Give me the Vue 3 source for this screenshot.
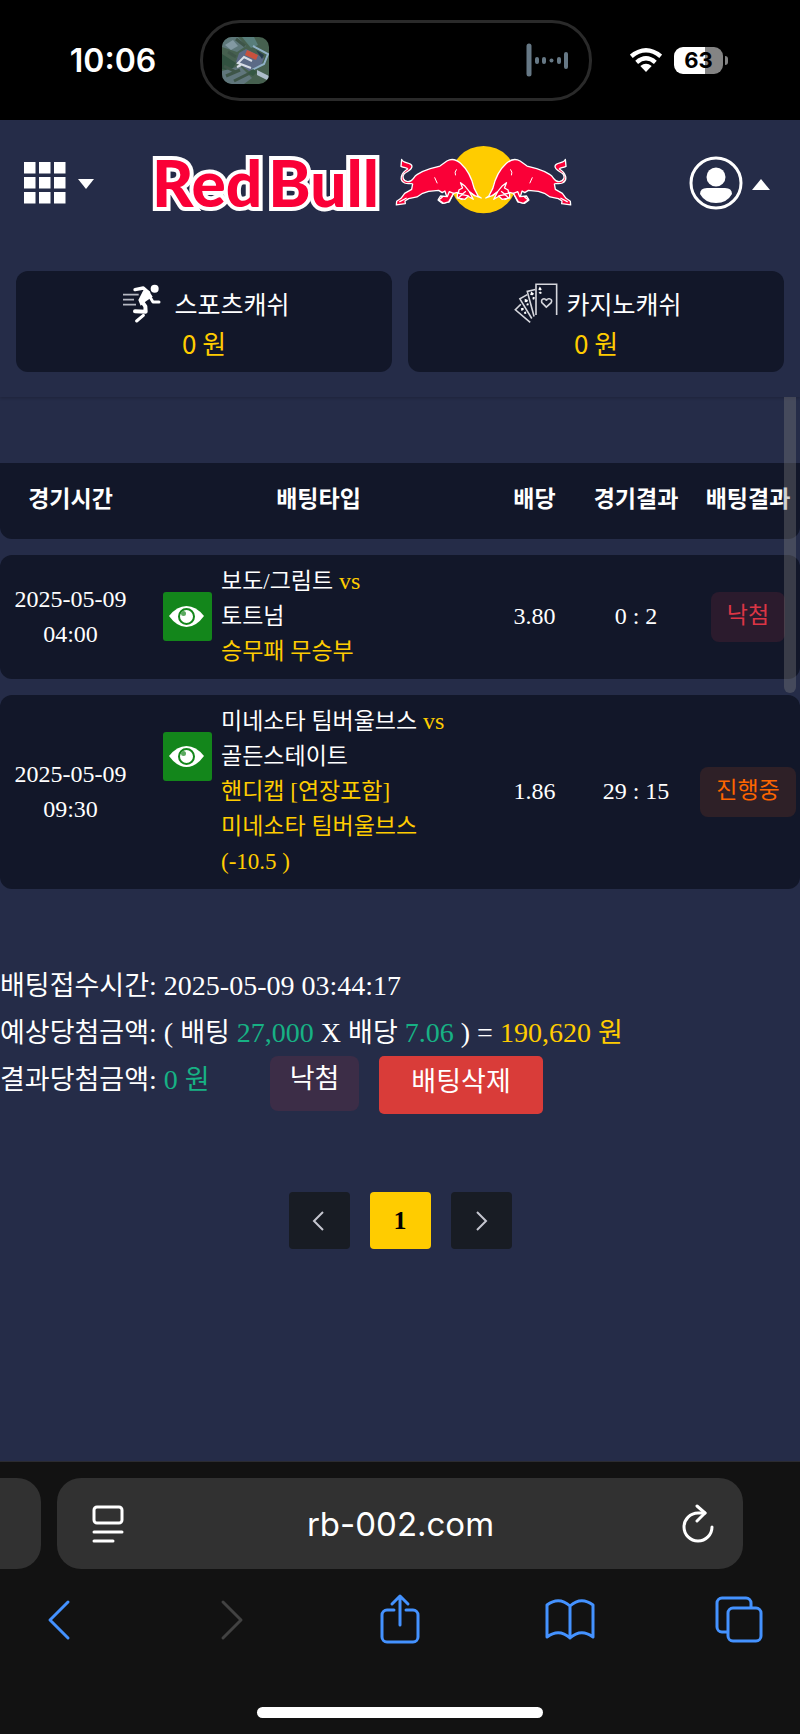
<template>
  <div class="phone">
    <div class="status-bar">
      <time class="clock">10:06</time>
      <div class="island">
        <svg class="island-photo" viewBox="0 0 47 47" aria-hidden="true">
          <rect width="47" height="47" fill="#46604f" />
          <path d="M0 0h16l8 9-9 6-15-5z" fill="#5d7779" />
          <path d="M3 8l8-5 5 6-7 4z" fill="#8299a2" />
          <path d="M20 0h12l4 8-7 3z" fill="#587e7b" />
          <path d="M0 17l14 9-5 8-9-2z" fill="#315140" />
          <path d="M0 34l18-5 12 12-8 6H0z" fill="#60767c" />
          <path d="M4 39l14-6M12 44l16-8M2 29l12 6M6 15l8 5M14 2l9 7" stroke="#3e5548" stroke-width="3" />
          <path d="M24 12l18 9-3 8-12 5-13-9 3-9z" fill="#5b6a86" />
          <path d="M29 31l-13-5 6-6 8 4M19 28l-4 2" fill="none" stroke="#d6dce5" stroke-width="2" />
          <path d="M25 13l11 5-2 5-11-5z" fill="#c8513d" />
          <path d="M31 9l15 8-4 10-12 6" fill="none" stroke="#8fb0c6" stroke-width="2" />
          <path d="M34 13l8 5-2 4z" fill="#253b4c" />
          <path d="M35 33l12 6v5l-12-6z" fill="#aebdcb" />
          <path d="M31 32l4 3-4 4-5-3z" fill="#355743" />
        </svg>
        <svg class="island-wave" viewBox="0 0 44 36" aria-hidden="true">
          <g stroke="#667885" stroke-width="4" stroke-linecap="round">
            <path d="M3 4v28" stroke-width="5" />
            <path d="M11 17v3M18 17v3M33 17v3M40 12v13" />
            <path d="M25.500 18.500v.1" />
          </g>
        </svg>
      </div>
      <div class="signals">
        <svg class="wifi" viewBox="0 0 96 72" aria-label="Wi-Fi">
          <g fill="none" stroke="#fff" stroke-width="13">
            <path d="M4 25Q48-11 92 25" />
            <path d="M20 43Q48 19 76 43" />
          </g>
          <path d="M31 54Q48 41 65 54L48 72z" fill="#fff" />
        </svg>
        <div class="battery"><span>63</span></div>
      </div>
    </div>

    <header class="site-header">
      <div class="top-row">
        <button class="plain menu-btn" aria-label="메뉴">
          <svg viewBox="0 0 70 42" class="menu-icon">
            <g fill="#fff">
              <template v-for="y in [0, 15, 30]" :key="y">
                <rect v-for="x in [0, 15, 30]" :key="x" :x="x" :y="y" width="11.500" height="11.500" />
              </template>
              <path d="M54 17h16l-8 10z" />
            </g>
          </svg>
        </button>
        <a href="#" class="logo">
          <span class="logo-text"><span>Red</span> <span>Bull</span></span>
          <svg class="logo-bulls" viewBox="-19 432 532 216" aria-hidden="true">
            <circle cx="247" cy="539" r="101" fill="#ffcc00" />
            <g id="bull" fill="#fa0037" stroke="#fff" stroke-width="4" stroke-linejoin="round">
              <path d="M254 594L263 588 275 565C282 535 294 510 316 490Q337 471 357 483L378 498 407 506Q430 513 447 524C460 532 458 546 475 545 489 543 493 530 485 521 477 514 461 510 462 498 464 486 490 491 493 478L495 499C484 504 476 503 475 507 495 519 502 540 484 549 472 554 462 548 460 552L463 568 484 580 495 595 508 604 509 615 482 611 483 603 472 596 447 591 430 580 412 574 382 571 371 578 363 573 357 592 373 596 383 601 371 610 350 606 337 580 325 577 326 594 303 598 293 589 278 598 289 576 271 588z" />
              <path d="M337 580L350 575 356 590 376 588 383 599 367 610 352 606z" />
              <path d="M273 588Q291 577 303 558L316 548 310 564 321 570 322 580 310 582 300 574" fill="none" />
              <path d="M328 508Q335 516 331 526M394 532L386 550" fill="none" stroke-width="3" />
              <path d="M292 588L312 584 323 594 310 599M478 594L500 606M370 591L382 600" fill="none" />
            </g>
            <use href="#bull" transform="translate(494 0) scale(-1 1)" />
          </svg>
        </a>
        <button class="plain profile-btn" aria-label="내 정보">
          <svg viewBox="0 0 81 54" class="profile-icon">
            <circle cx="27" cy="27" r="25" fill="none" stroke="#fff" stroke-width="3" />
            <circle cx="27" cy="21" r="9.500" fill="#fff" />
            <path d="M11 38q0-6 7-6h18q7 0 7 6-5 9-16 9t-16-9z" fill="#fff" />
            <path d="M63 34l9-11 9 11z" fill="#fff" />
          </svg>
        </button>
      </div>

      <div class="wallets">
        <section class="wallet">
          <div class="wallet-title">
            <svg class="wallet-icon" viewBox="366 98 132 120" aria-hidden="true">
              <path d="M369 133h47M369 148h33M369 163h39" stroke="#b5b8c2" stroke-width="5" />
              <circle cx="464" cy="115" r="12" fill="#fff" />
              <g fill="none" stroke="#fff" stroke-linecap="round" stroke-linejoin="round">
                <path d="M405 118L430 113 446 127" stroke-width="10" />
                <path d="M443 127L424 151 436 168 437 184 405 183" stroke-width="12" />
                <path d="M444 130L459 155H477" stroke-width="9" />
                <path d="M430 195L410 212" stroke-width="9" />
              </g>
              <path d="M430 120L447 122 458 139 438 153 422 166 415 149z" fill="#fff" />
            </svg>
            <span>스포츠캐쉬</span>
          </div>
          <div class="wallet-amount">0 원</div>
        </section>
        <section class="wallet">
          <div class="wallet-title">
            <svg class="wallet-icon" viewBox="340 98 132 124" aria-hidden="true">
              <g fill="none" stroke="#d5d6dc" stroke-width="5">
                <path d="M406 197V102H470V197" />
                <path d="M400 202L379 124 404 118" />
                <path d="M393 208L356 147 379 134" />
                <path d="M388 220L342 181 359 164" />
                <path d="M438 173L424 159Q421 148 431 147 437 147 438 153 440 146 447 147 458 149 453 159z" />
              </g>
              <g fill="#fff">
                <path d="M418 109l6 9-5 3-6-3zM419 124l6 5-6 3-5-4z" />
                <path d="M391 124l9 7-4 5-8-1zM396 141l7 2-3 7-5-2z" />
                <path d="M371 147l10 4-2 6-8 1zM378 161l6 1-2 6-6-1z" />
                <path d="M359 176l8-1 1 6-7 4zM369 188l6-2 1 7-6 1z" />
              </g>
            </svg>
            <span>카지노캐쉬</span>
          </div>
          <div class="wallet-amount">0 원</div>
        </section>
      </div>
    </header>

    <main class="content">
      <div class="scroll-thumb"></div>
      <table class="bets">
        <thead>
          <tr>
            <th class="col-time">경기시간</th>
            <th class="col-type">배팅타입</th>
            <th class="col-odds">배당</th>
            <th class="col-score">경기결과</th>
            <th class="col-result">배팅결과</th>
          </tr>
        </thead>
        <tbody>
          <tr v-for="bet in bets" :key="bet.home">
            <td>{{ bet.date }}<br>{{ bet.time }}</td>
            <td>
              <div class="match">
                <button class="view-btn" aria-label="경기 보기">
                  <svg viewBox="0 0 49 49">
                    <path d="M6 24Q14 14 23.500 14T41 24Q33 35 23.500 35T6 24z" fill="#fff" />
                    <circle cx="23.500" cy="24.500" r="7.500" fill="#fff" stroke="#13861b" stroke-width="2" />
                    <circle cx="20.500" cy="21.500" r="2.500" fill="#5aa85f" />
                  </svg>
                </button>
                <div class="match-text">
                  <div>{{ bet.home }} <span class="gold vs">vs</span></div>
                  <div>{{ bet.away }}</div>
                  <div v-for="line in bet.pick" :key="line" class="gold">{{ line }}</div>
                </div>
              </div>
            </td>
            <td>{{ bet.odds }}</td>
            <td>{{ bet.score }}</td>
            <td>
              <span class="tag" :class="bet.state">{{ bet.result }}</span>
            </td>
          </tr>
        </tbody>
      </table>

      <section class="summary">
        <div><span class="ko">배팅접수시간</span>: 2025-05-09 03:44:17</div>
        <div>
          <span class="ko">예상당첨금액</span>: (
          <span class="ko">배팅</span>&#32;<span class="green">27,000</span> X
          <span class="ko">배당</span>&#32;<span class="green">7.06</span> ) =
          <span class="gold">190,620 <span class="ko">원</span></span>
        </div>
        <div class="summary-last">
          <div><span class="ko">결과당첨금액</span>: <span class="green">0 <span class="ko">원</span></span></div>
          <span class="lost-badge">낙첨</span>
          <button class="delete-btn">배팅삭제</button>
        </div>
      </section>

      <nav class="pager" aria-label="페이지">
        <button aria-label="이전">
          <svg viewBox="0 0 20 20"><path d="M14 1L5 10l9 9" /></svg>
        </button>
        <button class="current">1</button>
        <button aria-label="다음">
          <svg viewBox="0 0 20 20"><path d="M6 1l9 9-9 9" /></svg>
        </button>
      </nav>
    </main>

    <footer class="browser">
      <div class="address-row">
        <div class="prev-tab"></div>
        <div class="address">
          <button class="plain" aria-label="페이지 메뉴">
            <svg viewBox="0 0 32 40" class="address-icon">
              <g fill="none" stroke="#fff" stroke-width="3" stroke-linecap="round">
                <rect x="2" y="3" width="28" height="16" rx="3" />
                <path d="M2 28h28M2 37h19" />
              </g>
            </svg>
          </button>
          <input type="text" value="rb-002.com" aria-label="주소" readonly>
          <button class="plain" aria-label="새로고침">
            <svg viewBox="0 0 32 40" class="address-icon">
              <g fill="none" stroke="#fff" stroke-width="3" stroke-linecap="round" stroke-linejoin="round">
                <path d="M30 23A14 14 0 1 1 16 9H23" />
                <path d="M15 2l8 7-8 8" />
              </g>
            </svg>
          </button>
        </div>
      </div>
      <nav class="toolbar" aria-label="브라우저">
        <button v-for="t in tools" :key="t.label" class="plain" :aria-label="t.label" :disabled="t.disabled">
          <svg viewBox="0 0 50 54"><path :d="t.path" /></svg>
        </button>
      </nav>
      <div class="home-bar"></div>
    </footer>
  </div>
</template>

<script setup>
const bets = [
  {
    date: '2025-05-09',
    time: '04:00',
    home: '보도/그림트',
    away: '토트넘',
    pick: ['승무패 무승부'],
    odds: '3.80',
    score: '0 : 2',
    result: '낙첨',
    state: 'lost',
  },
  {
    date: '2025-05-09',
    time: '09:30',
    home: '미네소타 팀버울브스',
    away: '골든스테이트',
    pick: ['핸디캡 [연장포함]', '미네소타 팀버울브스', '(-10.5 )'],
    odds: '1.86',
    score: '29 : 15',
    result: '진행중',
    state: 'pending',
  },
];

const tools = [
  { label: '뒤로', path: 'M34 10L16 28l18 18' },
  { label: '앞으로', path: 'M19 10l18 18-18 18', disabled: true },
  { label: '공유', path: 'M19 18H12a5 5 0 0 0-5 5V45a5 5 0 0 0 5 5H38a5 5 0 0 0 5-5V23a5 5 0 0 0-5-5H31M25 33V4M17 12l8-8 8 8' },
  { label: '책갈피', path: 'M25 14Q14 4 2 13V45Q14 36 25 46 36 36 48 45V13Q36 4 25 14zV46' },
  { label: '탭', path: 'M12 40H7a5 5 0 0 1-5-5V11a5 5 0 0 1 5-5H31a5 5 0 0 1 5 5V16M18 16H41a5 5 0 0 1 5 5V44a5 5 0 0 1-5 5H18a5 5 0 0 1-5-5V21a5 5 0 0 1 5-5z' },
];
</script>

<style>
body {
  margin: 0;
  background: #121212;
}
</style>

<style scoped>
.phone {
  display: flex;
  flex-direction: column;
  min-height: 100vh;
  background: #252c48;
  color: #fff;
  font-family: "Liberation Serif", "Noto Sans CJK KR", serif;
}

.phone * {
  box-sizing: border-box;
}

button,
input {
  padding: 0;
  border: 0;
  color: inherit;
  font: inherit;
}

svg {
  display: block;
}

.plain {
  background: none;
}

.gold {
  color: #ffcc00;
}

.green {
  color: #17b184;
}

/* status bar */
.status-bar {
  display: grid;
  grid-template-columns: 25% 49% 26%;
  align-items: center;
  height: 120px;
  background: #000;
  font-family: Inter, sans-serif;
}

.clock {
  padding-left: 26px;
  text-align: center;
  font-size: 32px;
  font-weight: 600;
}

.island {
  display: flex;
  align-items: center;
  justify-content: space-between;
  height: 81px;
  padding: 0 19px;
  border: 3px solid #2a2a2a;
  border-radius: 40px;
}

.island-photo {
  width: 47px;
  height: 47px;
  border-radius: 10px;
}

.island-wave {
  width: 44px;
  height: 36px;
}

.signals {
  display: flex;
  align-items: center;
  gap: 12px;
  padding-left: 38px;
}

.wifi {
  width: 32px;
  height: 24px;
}

.battery {
  position: relative;
  width: 49px;
  height: 27px;
  border-radius: 9px;
  background: linear-gradient(90deg, #fff 63%, #848484 63%);
  color: #000;
  text-align: center;
  font-size: 22px;
  font-weight: 700;
  line-height: 27px;
}

.battery::after {
  content: "";
  position: absolute;
  top: 9px;
  right: -5px;
  width: 3px;
  height: 9px;
  border-radius: 0 4px 4px 0;
  background: #848484;
}

/* site header */
.site-header {
  padding: 0 16px 25px;
  box-shadow: 0 1px 3px rgba(0, 0, 0, 0.2);
}

.top-row {
  display: flex;
  align-items: center;
  height: 126px;
  margin-bottom: 25px;
  padding: 0 14px 0 8px;
}

.menu-icon {
  width: 70px;
  height: 42px;
}

.logo {
  display: flex;
  align-items: center;
  gap: 16px;
  margin-left: 58px;
  padding-bottom: 6px;
  color: #fa0037;
  text-decoration: none;
}

.logo-text {
  display: flex;
  gap: 6px;
  padding-top: 6px;
  font-family: Lato, sans-serif;
  font-size: 64px;
  font-weight: 900;
  line-height: 72px;
  white-space: nowrap;
  -webkit-text-stroke: 8px #fff;
  paint-order: stroke fill;
}

.logo-bulls {
  width: 177px;
  height: 72px;
}

.profile-btn {
  margin-left: auto;
}

.profile-icon {
  width: 81px;
  height: 54px;
}

.wallets {
  display: flex;
  gap: 16px;
}

.wallet {
  flex: 1;
  padding: 12px 0 10px;
  border-radius: 12px;
  background: #121729;
  font-family: "Noto Sans CJK KR", sans-serif;
  font-size: 25px;
  line-height: 39px;
  text-align: center;
}

.wallet-title {
  display: flex;
  justify-content: center;
  align-items: center;
  gap: 8px;
  padding-left: 4px;
}

.wallet-icon {
  width: 44px;
  height: 40px;
}

.wallet-amount {
  color: #ffcc00;
  font-size: 26px;
}

/* bet list */
.content {
  position: relative;
  flex: 1;
  padding-top: 50px;
}

.scroll-thumb {
  position: absolute;
  top: 0;
  right: 4px;
  width: 12px;
  height: 296px;
  border-radius: 0 0 6px 6px;
  background: rgba(128, 128, 128, 0.36);
}

.bets {
  width: 100%;
  border-spacing: 0 16px;
  table-layout: fixed;
  font-size: 24px;
  line-height: 35px;
  text-align: center;
}

.bets th,
.bets td {
  padding: 0;
  background: #121729;
}

.bets th {
  height: 76px;
  padding-bottom: 3px;
  font-size: 23px;
}

.bets td {
  padding: 9px 0 10px;
}

.bets th:first-child {
  border-radius: 0 0 0 12px;
}

.bets th:last-child {
  border-radius: 0 0 12px 0;
}

.bets td:first-child {
  border-radius: 12px 0 0 12px;
}

.bets td:last-child {
  border-radius: 0 12px 12px 0;
}

.bets th:nth-child(-n + 3),
.bets td:nth-child(-n + 3) {
  padding-right: 3px;
}

.col-time {
  width: 18%;
}

.col-type {
  width: 44%;
}

.col-odds {
  width: 10%;
}

.col-score {
  width: 15%;
}

.col-result {
  width: 13%;
}

.match {
  display: flex;
  align-items: flex-start;
  gap: 9px;
  padding-left: 19px;
  text-align: left;
}

.view-btn {
  width: 49px;
  height: 49px;
  margin-top: 28px;
  border-radius: 3px;
  background: #13861b;
}

.match-text {
  font-size: 23px;
}

.vs {
  font-size: 24px;
  line-height: 1;
}

.tag {
  display: inline-block;
  padding: 6px 16px 9px;
  border-radius: 8px;
  font-size: 23px;
}

.tag.lost {
  background: #2b1b2d;
  color: #dc3545;
}

.tag.pending {
  background: #2e2027;
  color: #fd6500;
}

/* totals */
.summary {
  margin-top: 57px;
  font-size: 28px;
  line-height: 47px;
}

.ko {
  font-size: 27px;
  line-height: 1;
}

.summary-last {
  display: flex;
  align-items: flex-start;
  height: 58px;
}

.lost-badge {
  margin-left: 60px;
  padding: 0 20px 8px;
  border-radius: 8px;
  background: #3c2d47;
  font-size: 27px;
}

.delete-btn {
  height: 58px;
  margin-left: 20px;
  padding: 0 32px 6px;
  border-radius: 5px;
  background: #d93c39;
  font-size: 27px;
}

.pager {
  display: flex;
  justify-content: center;
  gap: 20px;
  padding: 78px 0 64px;
}

.pager button {
  display: grid;
  place-items: center;
  width: 61px;
  height: 57px;
  border-radius: 4px;
  background: #181c24;
}

.pager .current {
  background: #ffcc00;
  color: #000;
  font-size: 26px;
  font-weight: 700;
}

.pager svg {
  width: 20px;
  height: 20px;
  fill: none;
  stroke: #c5c6d0;
  stroke-width: 2;
}

/* browser chrome */
.browser {
  padding: 16px 0;
  border-top: 1px solid #2b2b30;
  background: #121212;
}

.address-row {
  display: flex;
  gap: 16px;
  padding-right: 57px;
}

.prev-tab {
  width: 41px;
  border-radius: 0 24px 24px 0;
  background: #313131;
}

.address {
  display: flex;
  flex: 1;
  align-items: center;
  height: 91px;
  padding: 0 29px 0 35px;
  border-radius: 24px;
  background: #313131;
}

.address input {
  flex: 1;
  min-width: 0;
  padding-right: 5px;
  background: none;
  text-align: center;
  font-family: Inter, sans-serif;
  font-size: 33px;
}

.address-icon {
  width: 32px;
  height: 40px;
}

.toolbar {
  display: flex;
  justify-content: space-between;
  padding: 23px 35px 0 34px;
}

.toolbar svg {
  width: 50px;
  height: 54px;
  fill: none;
  stroke: #4492ff;
  stroke-width: 3;
  stroke-linecap: round;
  stroke-linejoin: round;
}

.toolbar button:disabled svg {
  stroke: #424242;
}

.home-bar {
  width: 286px;
  max-width: 50%;
  height: 11px;
  margin: 61px auto 0;
  border-radius: 6px;
  background: #fff;
}
</style>
